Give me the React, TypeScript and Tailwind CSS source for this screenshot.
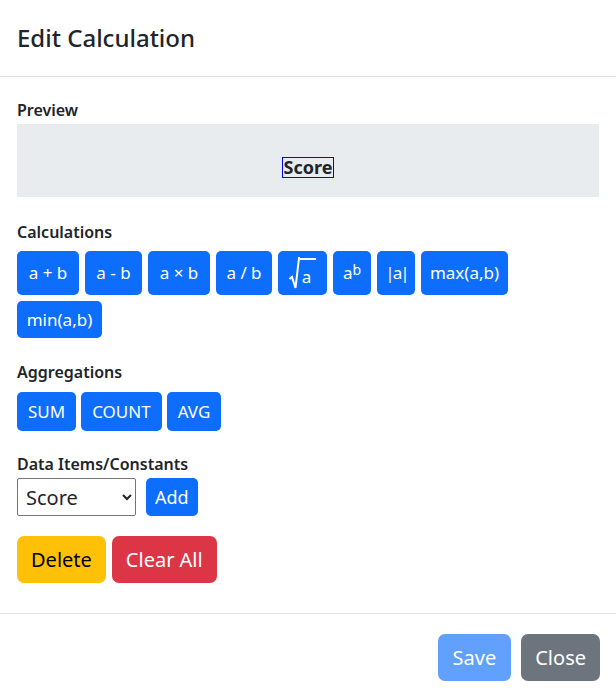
import React from "react";

const calcButtons = [
  { label: "a + b", w: "w-[62px]" },
  { label: "a - b", w: "w-[57px]" },
  { label: "a × b", w: "w-[62px]" },
  { label: "a / b", w: "w-[56px]" },
  { label: "sqrt", w: "w-[49px]" },
  { label: "pow", w: "w-[38px]" },
  { label: "abs", w: "w-[38px]" },
  { label: "max(a,b)", w: "w-[87px]" },
  { label: "min(a,b)", w: "w-[85px]" },
];

function Radical() {
  return (
    <span className="flex items-end">
      <svg width="11" height="32" viewBox="0 0 11 32" className="block">
        <path
          d="M0.5 22 L3 20 L6.5 31 L10 1 L11 1"
          fill="none"
          stroke="white"
          strokeWidth="2"
        />
      </svg>
      <span className="border-t-2 border-white pl-[3px] pr-[5px] leading-[24px] pt-[5px] -ml-[1px]">
        a
      </span>
    </span>
  );
}

function CalcLabel({ label }: { label: string }) {
  if (label === "sqrt") return <Radical />;
  if (label === "pow")
    return (
      <span>
        a<sup className="text-[14px] relative -top-[4px]">b</sup>
      </span>
    );
  if (label === "abs") return <span className="tracking-[-2px] pl-[1px]">|a|</span>;
  return <span>{label}</span>;
}

export default function App() {
  return (
    <div
      className="w-[616px] h-[695px] bg-white text-[#212529] overflow-hidden"
      style={{ fontFamily: '"Noto Sans", "Open Sans", sans-serif' }}
    >
      {/* HEADER */}
      <div className="h-[77px] border-b border-[#dee2e6] px-[17px] flex items-center">
        <h5 className="text-[24px] font-medium leading-none">Edit Calculation</h5>
      </div>

      {/* BODY */}
      <div className="px-[17px] pt-[21px] pb-[30px]">
        <div className="font-semibold text-[16px] leading-[24px] mb-[2px]">Preview</div>
        <div className="h-[73px] bg-[#e9ecef] flex justify-center pt-[33px]">
          <div className="h-[21px] border border-solid border-[#0000ff] px-[1px] font-bold text-[18px] leading-[19px]">
            Score
          </div>
        </div>

        <div className="mt-[23px] font-semibold text-[16px] leading-[24px] mb-[7px]">
          Calculations
        </div>
        <div className="flex flex-wrap gap-[6px] max-w-[560px]">
          {calcButtons.map((b) => (
            <button
              key={b.label}
              className={`${b.w} bg-[#0d6efd] text-white rounded-[5px] py-[6px] text-[17px] leading-[24px] flex items-center justify-center min-h-[37px]`}
            >
              <CalcLabel label={b.label} />
            </button>
          ))}
        </div>

        <div className="mt-[22px] font-semibold text-[16px] leading-[24px] mb-[8px]">
          Aggregations
        </div>
        <div className="flex gap-[5px]">
          {["SUM", "COUNT", "AVG"].map((a) => (
            <button
              key={a}
              className="bg-[#0d6efd] text-white rounded-[5px] px-[11px] h-[39px] text-[17px]"
            >
              {a}
            </button>
          ))}
        </div>

        <div className="mt-[21px] font-semibold text-[16px] leading-[24px] mb-[2px]">
          Data Items/Constants
        </div>
        <div className="flex gap-[10px]">
          <select className="w-[119px] h-[38px] border border-[#767676] rounded-[2px] text-[20px] pl-[4px] bg-white">
            <option>Score</option>
          </select>
          <button className="bg-[#0d6efd] text-white rounded-[5px] px-[9px] h-[38px] text-[18px]">
            Add
          </button>
        </div>

        <div className="mt-[20px] flex gap-[6px]">
          <button className="bg-[#ffc107] text-black rounded-[7px] px-[14px] h-[47px] text-[20px]">
            Delete
          </button>
          <button className="bg-[#dc3545] text-white rounded-[7px] px-[14px] h-[47px] text-[20px]">
            Clear All
          </button>
        </div>
      </div>

      {/* FOOTER */}
      <div className="border-t border-[#dee2e6] px-[16px] pt-[20px] flex justify-end gap-[10px]">
        <button className="bg-[#0d6efd] opacity-65 text-white rounded-[7px] px-[15px] h-[47px] text-[20px]">
          Save
        </button>
        <button className="bg-[#6c757d] text-white rounded-[7px] px-[14px] h-[47px] text-[20px]">
          Close
        </button>
      </div>
    </div>
  );
}
